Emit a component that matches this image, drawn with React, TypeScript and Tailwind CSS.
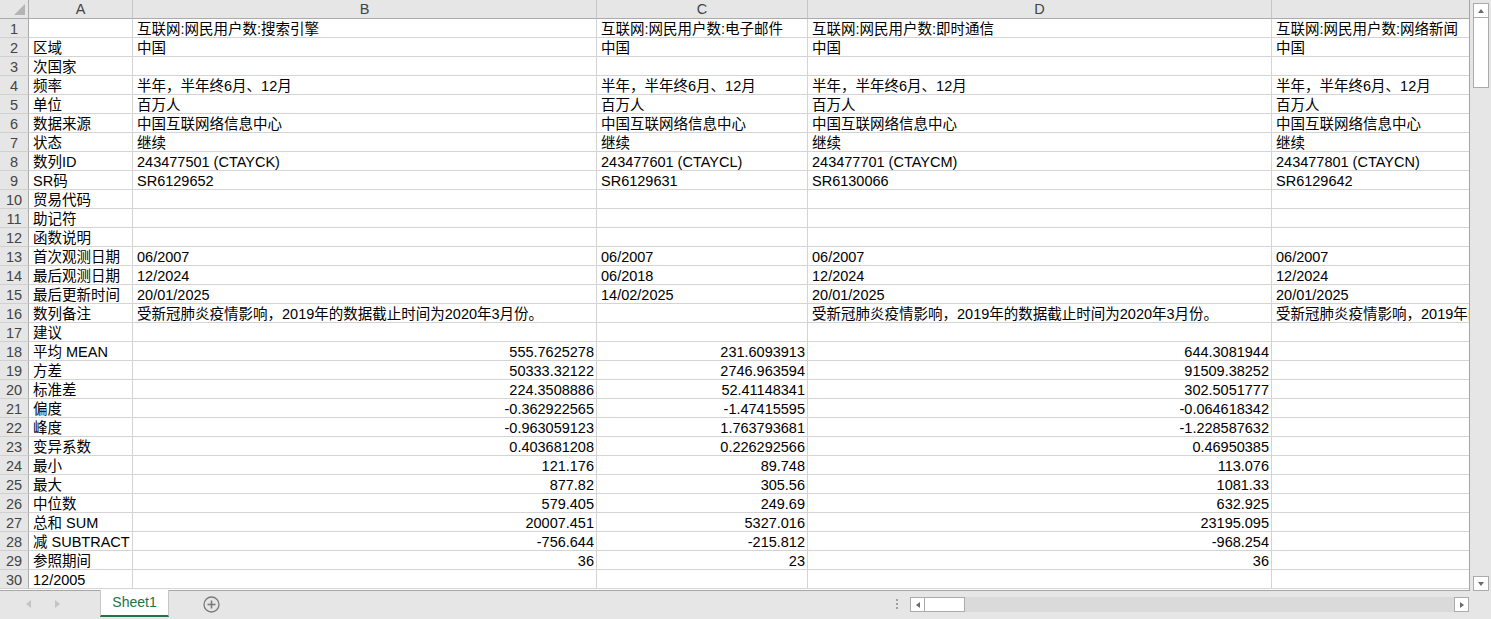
import React from 'react';

type Cell = string | { v: string; n: true };

const num = (v: string): Cell => ({ v, n: true });

const NOTE = '受新冠肺炎疫情影响，2019年的数据截止时间为2020年3月份。';
const FREQ = '半年，半年终6月、12月';
const SRC = '中国互联网络信息中心';

const rows: Cell[][] = [
  ['', '互联网:网民用户数:搜索引擎', '互联网:网民用户数:电子邮件', '互联网:网民用户数:即时通信', '互联网:网民用户数:网络新闻'],
  ['区域', '中国', '中国', '中国', '中国'],
  ['次国家', '', '', '', ''],
  ['频率', FREQ, FREQ, FREQ, FREQ],
  ['单位', '百万人', '百万人', '百万人', '百万人'],
  ['数据来源', SRC, SRC, SRC, SRC],
  ['状态', '继续', '继续', '继续', '继续'],
  ['数列ID', '243477501 (CTAYCK)', '243477601 (CTAYCL)', '243477701 (CTAYCM)', '243477801 (CTAYCN)'],
  ['SR码', 'SR6129652', 'SR6129631', 'SR6130066', 'SR6129642'],
  ['贸易代码', '', '', '', ''],
  ['助记符', '', '', '', ''],
  ['函数说明', '', '', '', ''],
  ['首次观测日期', '06/2007', '06/2007', '06/2007', '06/2007'],
  ['最后观测日期', '12/2024', '06/2018', '12/2024', '12/2024'],
  ['最后更新时间', '20/01/2025', '14/02/2025', '20/01/2025', '20/01/2025'],
  ['数列备注', NOTE, '', NOTE, NOTE],
  ['建议', '', '', '', ''],
  ['平均 MEAN', num('555.7625278'), num('231.6093913'), num('644.3081944'), ''],
  ['方差', num('50333.32122'), num('2746.963594'), num('91509.38252'), ''],
  ['标准差', num('224.3508886'), num('52.41148341'), num('302.5051777'), ''],
  ['偏度', num('-0.362922565'), num('-1.47415595'), num('-0.064618342'), ''],
  ['峰度', num('-0.963059123'), num('1.763793681'), num('-1.228587632'), ''],
  ['变异系数', num('0.403681208'), num('0.226292566'), num('0.46950385'), ''],
  ['最小', num('121.176'), num('89.748'), num('113.076'), ''],
  ['最大', num('877.82'), num('305.56'), num('1081.33'), ''],
  ['中位数', num('579.405'), num('249.69'), num('632.925'), ''],
  ['总和 SUM', num('20007.451'), num('5327.016'), num('23195.095'), ''],
  ['减 SUBTRACT', num('-756.644'), num('-215.812'), num('-968.254'), ''],
  ['参照期间', num('36'), num('23'), num('36'), ''],
  ['12/2005', '', '', '', ''],
];

const cols = ['A', 'B', 'C', 'D', ''];
const gridCols = 'grid grid-cols-[29px_104px_464px_211px_464px_400px]';

function DataCell({ c }: { c: Cell }) {
  if (typeof c === 'string') {
    return (
      <div className="h-[19px] border-r border-b border-[#d4d4d4] pl-[4px] leading-[20px] whitespace-nowrap overflow-hidden text-black">
        {c}
      </div>
    );
  }
  return (
    <div className="h-[19px] border-r border-b border-[#d4d4d4] pr-[2px] text-right leading-[20px] whitespace-nowrap overflow-hidden text-black">
      {c.v}
    </div>
  );
}

function Arrow({ dir }: { dir: 'up' | 'down' | 'left' | 'right' }) {
  const pts = {
    up: '1,6 4,2 7,6',
    down: '1,2 4,6 7,2',
    left: '6,1 2,4 6,7',
    right: '2,1 6,4 2,7',
  }[dir];
  return (
    <svg width="8" height="8" viewBox="0 0 8 8">
      <polygon points={pts} fill="#6b6b6b" />
    </svg>
  );
}

export default function App() {
  return (
    <div className="w-[1491px] h-[619px] overflow-hidden bg-[#e6e6e6] font-['Liberation_Sans','Noto_Sans_CJK_SC',sans-serif] text-[14.5px] select-none">
      <div className="flex h-[591px]">
        {/* sheet */}
        <div className="w-[1470px] h-[591px] overflow-hidden bg-white border-r border-b border-[#a6a6a6]">
          <div className={gridCols}>
            <div className="relative h-[19px] bg-[#e6e6e6] border-r border-b border-[#ababab]">
              <svg className="absolute right-[3px] bottom-[3px]" width="11" height="11" viewBox="0 0 11 11">
                <polygon points="11,0 11,11 0,11" fill="#b4b4b4" />
              </svg>
            </div>
            {cols.map((c, i) => (
              <div
                key={i}
                className="h-[19px] bg-[#e6e6e6] border-r border-b border-r-[#c6c6c6] border-b-[#ababab] text-center leading-[19px] text-[#444]"
              >
                {c}
              </div>
            ))}
          </div>
          {rows.map((r, ri) => (
            <div key={ri} className={gridCols}>
              <div className="h-[19px] bg-[#e6e6e6] border-r border-b border-r-[#ababab] border-b-[#d0d0d0] text-center leading-[20px] text-[#444]">
                {ri + 1}
              </div>
              {r.map((c, ci) => (
                <DataCell key={ci} c={c} />
              ))}
            </div>
          ))}
        </div>
        {/* vertical scrollbar */}
        <div className="w-[21px] flex flex-col items-center pt-[3px]">
          <div className="w-[16px] h-[15px] bg-white border border-[#ababab] flex items-center justify-center">
            <Arrow dir="up" />
          </div>
          <div className="w-[16px] h-[70px] bg-white border border-[#ababab] border-t-0" />
          <div className="flex-1" />
          <div className="w-[16px] h-[15px] bg-white border border-[#ababab] flex items-center justify-center">
            <Arrow dir="down" />
          </div>
        </div>
      </div>
      {/* tab bar */}
      <div className="flex h-[28px] items-start">
        <div className="w-[100px] h-[26px] flex items-center gap-[22px] pl-[26px]">
          <svg width="6" height="8" viewBox="0 0 6 8">
            <polygon points="5,0 5,8 0,4" fill="#c4c4c4" />
          </svg>
          <svg width="6" height="8" viewBox="0 0 6 8">
            <polygon points="1,0 1,8 6,4" fill="#c4c4c4" />
          </svg>
        </div>
        <div className="w-[69px] h-[27px] -mt-[1px] bg-white border-x border-[#c6c6c6] border-b-[2px] border-b-[#217346] flex items-center justify-center text-[#217346] text-[14px]">
          Sheet1
        </div>
        <div className="w-[84px] h-[26px] flex items-center justify-center">
          <svg width="17" height="17" viewBox="0 0 17 17">
            <circle cx="8.5" cy="8.5" r="7.5" fill="none" stroke="#7a7a7a" strokeWidth="1.3" />
            <line x1="8.5" y1="4.5" x2="8.5" y2="12.5" stroke="#7a7a7a" strokeWidth="1.6" />
            <line x1="4.5" y1="8.5" x2="12.5" y2="8.5" stroke="#7a7a7a" strokeWidth="1.6" />
          </svg>
        </div>
        <div className="flex-1" />
        <div className="w-[14px] h-[26px] flex flex-col items-center justify-center gap-[2px] mr-[6px]">
          <div className="w-[2px] h-[2px] bg-[#a0a0a0]" />
          <div className="w-[2px] h-[2px] bg-[#a0a0a0]" />
          <div className="w-[2px] h-[2px] bg-[#a0a0a0]" />
        </div>
        <div className="mt-[6px] mr-[22px] w-[559px] h-[15px] bg-[#dadada] flex">
          <div className="w-[15px] h-[15px] bg-white border border-[#ababab] flex items-center justify-center">
            <Arrow dir="left" />
          </div>
          <div className="w-[40px] h-[15px] bg-white border border-[#ababab] border-l-0" />
          <div className="flex-1" />
          <div className="w-[15px] h-[15px] bg-white border border-[#ababab] flex items-center justify-center">
            <Arrow dir="right" />
          </div>
        </div>
      </div>
    </div>
  );
}
